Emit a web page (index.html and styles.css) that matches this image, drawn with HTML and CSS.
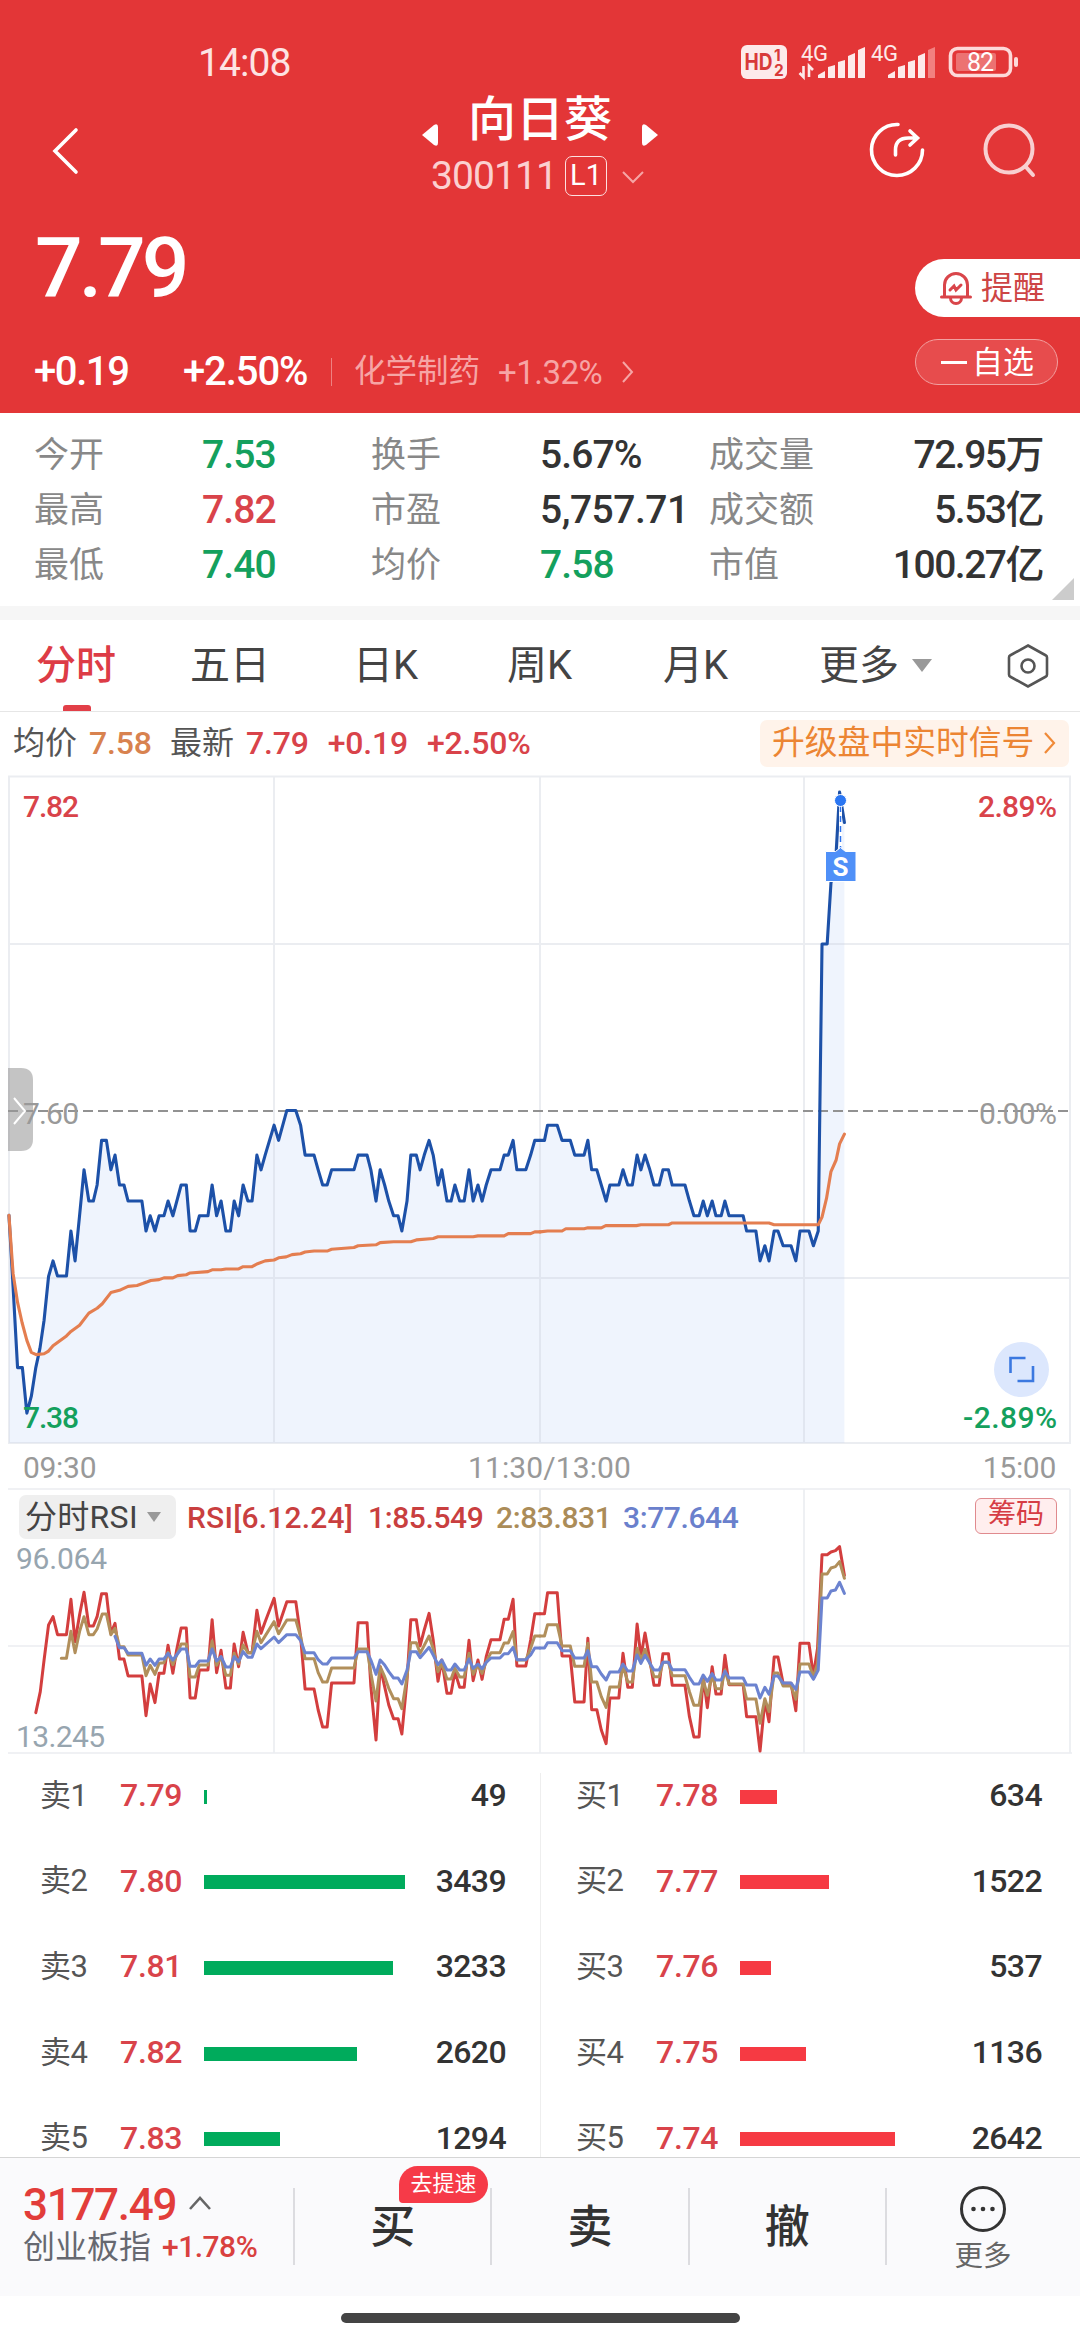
FILE: index.html
```html
<!DOCTYPE html>
<html lang="zh-CN">
<head>
<meta charset="utf-8">
<title>向日葵 300111</title>
<link rel="stylesheet" href="styles.css">
</head>
<body>
<header class="header">
  <div class="status">
    <span class="clock">14:08</span>
    <svg class="status-icons" width="290" height="40" viewBox="0 0 290 40">
      <rect x="0" y="3" width="46" height="34" rx="6" fill="#fdeaea"/>
      <text x="3.500" y="28" class="st-hd" textLength="28" lengthAdjust="spacingAndGlyphs">HD</text>
      <text x="33" y="18.500" class="st-sub">1</text>
      <text x="33" y="34" class="st-sub">2</text>
      <text x="60" y="19" class="st-4g" textLength="27">4G</text>
      <path d="M62.500 24v11l-4-4M68 35v-11l4 4" fill="none" stroke="#fdeaea" stroke-width="2.600"/>
      <g fill="#fdeaea">
        <path d="M77 36v-3l7-4v7zM87 36V25l7-2v13zM97 36V20l7-2v18zM107 36V14l7-3v25zM117 36V8l7-3v31z"/>
        <path d="M147 36v-3l7-4v7zM157 36V25l7-2v13zM167 36V20l7-2v18zM177 36V14l7-3v25z"/>
      </g>
      <path d="M187 36V8l7-3v31z" fill="#f28080"/>
      <text x="130" y="19" class="st-4g" textLength="27">4G</text>
      <rect x="209.500" y="6.500" width="60" height="27" rx="7" fill="none" stroke="#fdd9d9" stroke-width="3.600"/>
      <rect x="215" y="11" width="40" height="18" rx="2" fill="#ec7272"/>
      <rect x="273" y="15" width="4" height="10" rx="2" fill="#fdd9d9"/>
      <text x="226" y="28.500" class="st-bat" textLength="27">82</text>
    </svg>
  </div>
  <nav class="nav">
    <svg class="back" width="34" height="50" viewBox="0 0 34 50"><path d="M27 4L6 25l21 21"/></svg>
    <div class="title">
      <div class="name-row">
        <svg width="17" height="24" viewBox="0 0 17 24"><path d="M0 12L12 2q4-2 4 2v16q0 4-4 2z" fill="#fff"/></svg>
        <h1>向日葵</h1>
        <svg width="17" height="24" viewBox="0 0 17 24"><path d="M17 12L5 2Q1 0 1 4v16q0 4 4 2z" fill="#fff"/></svg>
      </div>
      <div class="code-row">
        <span class="code">300111</span><span class="level">L1</span>
        <svg width="24" height="14" viewBox="0 0 24 14"><path d="M2 2l10 10L22 2" fill="none" stroke="#f6a5a5" stroke-width="2"/></svg>
      </div>
    </div>
    <svg class="share" width="60" height="60" viewBox="0 0 60 60"><path d="M31 4.500A25.500 25.500 0 1 0 55.500 30M28.500 35v-5q0-12 13-12h8M43 11l7.500 7-7.500 7"/></svg>
    <svg class="search" width="60" height="60" viewBox="0 0 60 60"><circle cx="29" cy="29" r="23.500"/><path d="M46 47l7 8"/></svg>
  </nav>
  <div class="price-row">
    <div class="price">7.79</div>
    <button class="remind">
      <svg width="32" height="34" viewBox="0 0 32 34"><path d="M1.500 26H30.500M4.500 26V14a11.500 11.500 0 0 1 23 0v12M10.500 27a5.500 5.500 0 0 0 11 0M10 19l4-4 2 4 5-5"/></svg>
      <span>提醒</span>
    </button>
  </div>
  <div class="change-row">
    <span class="chg">+0.19</span><span class="pct">+2.50%</span><i class="vr"></i>
    <span class="sector">化学制药</span><span class="sector-pct">+1.32%</span>
    <svg width="14" height="24" viewBox="0 0 14 24"><path d="M2 2l9 10-9 10" fill="none" stroke="#f6a5a5" stroke-width="2"/></svg>
    <button class="fav"><i></i><span>自选</span></button>
  </div>
</header>

<section class="quote">
  <span class="k">今开</span><span class="v down">7.53</span><span class="k">换手</span><span class="v">5.67%</span><span class="k">成交量</span><span class="v r">72.95万</span>
  <span class="k">最高</span><span class="v up">7.82</span><span class="k">市盈</span><span class="v">5,757.71</span><span class="k">成交额</span><span class="v r">5.53亿</span>
  <span class="k">最低</span><span class="v down">7.40</span><span class="k">均价</span><span class="v down">7.58</span><span class="k">市值</span><span class="v r">100.27亿</span>
  <i class="corner"></i>
</section>

<nav class="tabs">
  <span class="tab on">分时</span><span class="tab">五日</span><span class="tab">日K</span><span class="tab">周K</span><span class="tab">月K</span><span class="tab more">更多<i class="caret"></i></span>
  <svg class="hex" width="44" height="46" viewBox="0 0 44 46"><path d="M22 2.500L40 12.500q1 .5 1 2v17q0 1.500-1 2L22 43.500 4 33.500q-1-.5-1-2v-17q0-1.500 1-2z"/><circle cx="22" cy="23" r="6.500"/></svg>
</nav>

<div class="info">
  <span>均价</span><b class="orange">7.58</b><span class="latest">最新</span><b class="up">7.79</b><b class="up gap">+0.19</b><b class="up gap">+2.50%</b>
  <a class="promo">升级盘中实时信号<svg width="14" height="26" viewBox="0 0 14 26"><path d="M2 3l9 10-9 10" fill="none" stroke="#f08a38" stroke-width="2.200"/></svg></a>
</div>

<svg class="price-chart" width="1080" height="672" viewBox="0 774 1080 672">
  <!-- one minute is about 13 units wide, one cent about 34 units high in each session group -->
  <g transform="translate(0 760) scale(.34435 .44643)">
    <path class="area" d="M26 1530L26 1020 38 1180 51 1361 65 1361 78 1463 91 1425 104 1361 116 1318 128 1255 141 1157 154 1122 167 1156 193 1156 206 1055 218 1122 231 1021 244 918 258 988 271 988 282 952 295 852 309 852 322 918 334 885 347 952 360 952 372 988 412 988 424 1055 436 1021 450 1055 462 1021 476 1021 488 988 502 1021 526 952 541 952 552 1055 567 1055 579 1021 604 1021 616 952 629 1021 642 988 656 1055 669 1055 680 988 693 1021 706 952 720 988 732 988 746 885 758 918 770 885 796 818 809 852 833 785 859 785 873 818 886 885 912 885 924 918 937 952 950 952 963 918 1028 918 1040 885 1066 885 1077 918 1092 988 1104 918 1117 952 1129 988 1143 1021 1156 1021 1167 1055 1182 988 1193 885 1209 885 1220 918 1232 885 1246 852 1258 885 1272 952 1283 918 1298 988 1310 988 1321 952 1335 988 1348 988 1362 918 1374 988 1388 952 1400 988 1412 952 1426 918 1452 918 1464 885 1476 885 1490 852 1501 918 1527 918 1541 885 1553 852 1568 852V1530z"/>
  </g>
  <g transform="translate(540 760) scale(.34435 .44643)">
    <path class="area" d="M0 1530L0 852 13 852 22 818 50 818 64 852 88 852 101 885 128 885 139 852 150 918 165 918 178 952 192 988 203 952 229 952 241 918 255 952 268 952 282 885 293 918 305 885 319 918 331 952 346 952 357 918 373 918 384 952 421 952 434 988 447 1021 462 1021 474 988 486 1021 500 988 511 1021 526 1021 537 988 549 1021 590 1021 600 1055 627 1055 639 1122 653 1088 665 1122 680 1055 691 1055 706 1088 729 1088 743 1122 755 1055 781 1055 794 1088 808 1055 819 412 834 412 845 275 858 235 870 72 884 140V1530z"/>
  </g>
  <path class="grid" d="M9 776.500H1070V1443H9zM9 944H1070M9 1278H1070M274 776V1443M540 776V1443M804 776V1443"/>
  <path class="mid" d="M8 1111H1068"/>
  <g transform="translate(0 760) scale(.34435 .44643)">
    <polyline class="blue-line" points="26 1020 38 1180 51 1361 65 1361 78 1463 91 1425 104 1361 116 1318 128 1255 141 1157 154 1122 167 1156 193 1156 206 1055 218 1122 231 1021 244 918 258 988 271 988 282 952 295 852 309 852 322 918 334 885 347 952 360 952 372 988 412 988 424 1055 436 1021 450 1055 462 1021 476 1021 488 988 502 1021 526 952 541 952 552 1055 567 1055 579 1021 604 1021 616 952 629 1021 642 988 656 1055 669 1055 680 988 693 1021 706 952 720 988 732 988 746 885 758 918 770 885 796 818 809 852 833 785 859 785 873 818 886 885 912 885 924 918 937 952 950 952 963 918 1028 918 1040 885 1066 885 1077 918 1092 988 1104 918 1117 952 1129 988 1143 1021 1156 1021 1167 1055 1182 988 1193 885 1209 885 1220 918 1232 885 1246 852 1258 885 1272 952 1283 918 1298 988 1310 988 1321 952 1335 988 1348 988 1362 918 1374 988 1388 952 1400 988 1412 952 1426 918 1452 918 1464 885 1476 885 1490 852 1501 918 1527 918 1541 885 1553 852 1568 852"/>
    <polyline class="avg-line" points="26 1020 38 1150 51 1215 64 1260 78 1300 91 1327 105 1332 128 1330 141 1324 154 1312 193 1290 206 1280 231 1266 258 1239 282 1228 297 1218 322 1193 347 1188 372 1179 398 1177 424 1170 438 1166 462 1164 476 1160 502 1160 516 1155 541 1153 552 1149 604 1146 616 1142 642 1142 656 1140 693 1140 706 1135 732 1135 746 1129 770 1122 796 1120 809 1115 831 1113 848 1108 873 1106 886 1102 912 1100 950 1100 963 1096 1028 1092 1040 1088 1092 1086 1104 1081 1143 1079 1193 1079 1209 1075 1258 1072 1272 1068 1374 1068 1388 1066 1464 1066 1476 1061 1541 1061 1553 1057 1568 1057"/>
  </g>
  <g transform="translate(540 760) scale(.34435 .44643)">
    <polyline class="blue-line" points="0 852 13 852 22 818 50 818 64 852 88 852 101 885 128 885 139 852 150 918 165 918 178 952 192 988 203 952 229 952 241 918 255 952 268 952 282 885 293 918 305 885 319 918 331 952 346 952 357 918 373 918 384 952 421 952 434 988 447 1021 462 1021 474 988 486 1021 500 988 511 1021 526 1021 537 988 549 1021 590 1021 600 1055 627 1055 639 1122 653 1088 665 1122 680 1055 691 1055 706 1088 729 1088 743 1122 755 1055 781 1055 794 1088 808 1055 819 412 834 412 845 275 858 235 870 72 884 140"/>
    <polyline class="avg-line" points="0 1057 22 1055 64 1055 75 1050 128 1050 139 1048 178 1048 191 1043 280 1043 293 1041 373 1041 384 1037 665 1037 680 1041 808 1041 819 1024 832 982 845 922 860 896 870 860 884 838"/>
  </g>
  <path d="M840.500 804V848" stroke="#fff" stroke-width="3"/>
  <path d="M840.500 806V848" stroke="#2a72ee" stroke-width="1.500" stroke-dasharray="6 4"/>
  <circle cx="840.500" cy="800.500" r="6" fill="#2a76f2" stroke="#fff" stroke-width="1"/>
  <path d="M825.500 851.500h10l5-4 5 4h10.500v30h-30.500z" fill="#4f90f8" stroke="#fff" stroke-width="1"/>
  <text x="840.500" y="875.500" class="s-mark" text-anchor="middle">S</text>
  <text x="23" y="817" class="lab up" textLength="56">7.82</text>
  <text x="1057" y="817" class="lab up" text-anchor="end" textLength="79">2.89%</text>
  <text x="23" y="1124" class="lab gray" textLength="56">7.60</text>
  <text x="1057" y="1124" class="lab gray" text-anchor="end" textLength="78">0.00%</text>
  <text x="23" y="1428" class="lab down" textLength="56">7.38</text>
  <text x="1057" y="1428" class="lab down" text-anchor="end" textLength="94">-2.89%</text>
  <circle cx="1021.500" cy="1369.500" r="27.500" fill="#dce7fd"/>
  <path d="M1010.500 1373v-15h15M1033 1366v15h-15.500" fill="none" stroke="#3b78e0" stroke-width="2.600"/>
  <path d="M8 1068h13q12 0 12 12v59q0 12-12 12h-13z" fill="#999" fill-opacity=".58"/>
  <path d="M14 1098l11 13-11 13" fill="none" stroke="#fff" stroke-width="2"/>
</svg>

<div class="axis"><span>09:30</span><span>11:30/13:00</span><span>15:00</span></div>

<section class="rsi">
  <svg class="rsi-chart" width="1080" height="266" viewBox="0 1488 1080 266">
    <path class="grid thin" d="M8 1489H1070M8 1646H1070M8 1753H1072M274 1489V1753M540 1489V1753M804 1489V1753M1070 1489V1753"/>
    <g transform="translate(0 1430) scale(.34435 .33333)">
      <polyline class="r1" points="104 848 117 785 128 690 141 585 154 560 167 614 193 614 206 508 218 635 231 555 244 487 258 588 271 588 282 560 295 491 309 491 322 610 334 580 347 687 360 687 372 738 412 738 424 857 436 762 450 818 462 730 476 730 488 646 502 730 513 660 526 594 541 594 552 804 567 804 579 720 604 720 616 569 629 728 642 661 656 774 669 774 680 642 693 710 706 607 720 668 732 668 746 541 758 610 770 575 796 505 809 588 833 515 859 515 873 620 886 777 912 777 924 840 937 891 950 891 963 759 1028 759 1040 578 1066 578 1077 770 1092 930 1104 710 1117 770 1129 825 1143 866 1156 866 1167 912 1182 750 1193 569 1209 569 1220 648 1232 600 1246 550 1258 630 1272 754 1283 690 1298 790 1310 790 1321 725 1335 772 1348 772 1362 631 1374 752 1388 690 1400 748 1412 680 1426 629 1452 629 1464 568 1476 568 1490 508 1501 708 1527 708 1541 630 1553 551 1568 551"/>
      <polyline class="r2" points="178 685 193 685 206 604 218 668 231 605 244 560 258 614 271 614 282 597 297 552 309 552 322 614 334 595 347 650 360 650 372 675 412 675 424 737 436 706 450 733 462 700 476 698 488 667 502 704 526 642 541 642 552 741 567 741 579 705 604 705 616 633 629 706 642 680 656 736 669 736 680 670 693 702 706 645 720 668 732 668 746 604 758 638 796 575 809 611 833 570 859 570 873 620 886 686 912 686 924 728 937 756 950 756 963 714 1028 714 1040 657 1066 657 1077 730 1092 813 1104 710 1117 740 1129 775 1143 806 1156 806 1167 836 1182 740 1193 638 1209 638 1220 670 1246 618 1258 656 1272 725 1283 700 1298 747 1310 747 1321 715 1335 741 1348 741 1362 670 1374 733 1388 704 1400 730 1412 695 1426 668 1452 668 1464 639 1476 639 1490 605 1501 690 1527 690 1541 655 1553 618 1568 618"/>
      <polyline class="r3" points="334 619 347 653 360 653 372 670 412 670 424 706 436 687 450 706 462 687 476 687 488 670 502 690 526 657 541 657 552 709 567 709 579 693 604 693 616 657 629 693 642 680 656 711 669 711 680 680 693 695 706 665 720 682 732 682 746 642 758 656 796 621 809 638 833 614 859 614 873 632 886 668 912 668 924 689 937 702 950 702 963 684 1028 684 1040 665 1066 665 1077 690 1092 733 1104 690 1117 705 1129 725 1143 744 1156 744 1167 762 1182 720 1193 665 1209 665 1220 683 1246 652 1258 675 1272 704 1283 690 1298 720 1310 720 1321 702 1335 720 1348 720 1362 687 1374 715 1388 702 1400 716 1412 697 1426 684 1452 684 1464 671 1476 671 1490 652 1501 689 1527 689 1541 675 1553 654 1568 654"/>
    </g>
    <g transform="translate(540 1430) scale(.34435 .33333)">
      <polyline class="r1" points="0 551 13 551 22 488 50 488 64 678 88 678 101 816 128 816 139 625 150 839 165 839 178 900 192 941 203 804 229 804 241 670 255 772 268 772 282 582 293 680 305 609 319 690 331 766 346 766 357 671 373 671 384 766 421 766 434 860 447 921 462 921 474 740 486 833 500 710 511 792 526 792 537 676 549 764 590 764 600 860 627 860 639 963 653 812 665 875 680 681 691 681 706 760 729 760 743 842 755 640 781 640 794 737 806 655 819 374 834 374 845 366 858 362 870 350 884 436"/>
      <polyline class="r2" points="0 618 13 618 22 584 50 584 64 648 88 648 101 709 128 709 139 640 150 756 165 756 178 800 192 832 203 771 229 771 241 708 255 756 268 756 282 655 293 690 305 658 319 700 331 740 346 740 357 697 373 697 384 737 421 737 434 785 447 826 462 826 474 750 486 796 500 735 511 776 526 776 537 720 549 762 590 762 600 807 627 807 639 880 653 806 665 845 680 729 691 729 706 768 729 768 743 808 755 702 781 702 794 740 806 700 819 432 834 432 845 414 858 410 870 395 884 445"/>
      <polyline class="r3" points="0 654 13 654 22 638 50 638 64 662 88 662 101 684 128 684 139 662 150 710 165 710 178 732 192 750 203 726 229 726 241 702 255 723 268 723 282 675 293 700 305 676 319 700 331 720 346 720 357 697 373 697 384 719 421 719 434 742 447 762 462 762 474 735 486 754 500 731 511 750 526 750 537 724 549 744 590 744 600 765 627 765 639 804 653 772 665 793 680 738 691 738 706 759 729 759 743 778 755 726 781 726 794 748 808 720 819 504 834 504 845 483 858 480 870 457 884 490"/>
    </g>
    <text x="16" y="1569" class="lab slate" textLength="91">96.064</text>
    <text x="16" y="1747" class="lab slate" textLength="89">13.245</text>
  </svg>
  <div class="legend">
    <span class="tag">分时RSI<i class="caret small"></i></span>
    <span class="l0">RSI[6.12.24]</span><span class="l1">1:85.549</span><span class="l2">2:83.831</span><span class="l3">3:77.644</span>
    <span class="chips">筹码</span>
  </div>
</section>

<section class="book">
  <div class="side sell">
    <div class="row"><span class="n">卖1</span><span class="p">7.79</span><i style="width:3px"></i><span class="q">49</span></div>
    <div class="row"><span class="n">卖2</span><span class="p">7.80</span><i style="width:201px"></i><span class="q">3439</span></div>
    <div class="row"><span class="n">卖3</span><span class="p">7.81</span><i style="width:189px"></i><span class="q">3233</span></div>
    <div class="row"><span class="n">卖4</span><span class="p">7.82</span><i style="width:153px"></i><span class="q">2620</span></div>
    <div class="row"><span class="n">卖5</span><span class="p">7.83</span><i style="width:76px"></i><span class="q">1294</span></div>
  </div>
  <div class="side buy">
    <div class="row"><span class="n">买1</span><span class="p">7.78</span><i style="width:37px"></i><span class="q">634</span></div>
    <div class="row"><span class="n">买2</span><span class="p">7.77</span><i style="width:89px"></i><span class="q">1522</span></div>
    <div class="row"><span class="n">买3</span><span class="p">7.76</span><i style="width:31px"></i><span class="q">537</span></div>
    <div class="row"><span class="n">买4</span><span class="p">7.75</span><i style="width:66px"></i><span class="q">1136</span></div>
    <div class="row"><span class="n">买5</span><span class="p">7.74</span><i style="width:155px"></i><span class="q">2642</span></div>
  </div>
</section>

<footer class="footer">
  <div class="index">
    <div class="index-val"><span>3177.49</span><svg width="24" height="16" viewBox="0 0 24 16"><path d="M2 14L12 3l10 11" fill="none" stroke="#666" stroke-width="2.600"/></svg></div>
    <div class="index-name">创业板指<b>+1.78%</b></div>
  </div>
  <div class="act">买<span class="badge">去提速</span></div>
  <div class="act">卖</div>
  <div class="act">撤</div>
  <div class="act last">
    <svg width="48" height="48" viewBox="0 0 48 48"><circle cx="24" cy="24" r="21.500" fill="none" stroke="#333" stroke-width="3"/><g fill="#333"><circle cx="14.500" cy="24" r="2.300"/><circle cx="24" cy="24" r="2.300"/><circle cx="33.500" cy="24" r="2.300"/></g></svg>
    <span>更多</span>
  </div>
</footer>
<div class="home"><i></i></div>
</body>
</html>
```

FILE: styles.css
```css
* { box-sizing: border-box; }
body {
  margin: 0;
  width: 1080px;
  height: 2340px;
  overflow: hidden;
  background: #fff;
  color: #333;
  font-family: Roboto, "Noto Sans CJK SC", sans-serif;
  line-height: 1;
}
svg { display: block; flex: none; }
i { display: block; flex: none; font-style: normal; }
b { font-weight: 500; }
button { font: inherit; border: 0; padding: 0; margin: 0; }
h1 { margin: 0; }
span, b, a { white-space: nowrap; }
.up { color: #d9434a; fill: #d9434a; }
.down { color: #14a05d; fill: #14a05d; }

.header { height: 413px; background: #e33637; color: #fff; overflow: hidden; }
.status { display: flex; align-items: center; height: 84px; }
.clock { width: 542px; margin-left: 198px; padding-top: 42px; height: 84px; font-size: 39px; letter-spacing: -.9px; color: #fde3e3; line-height: 42px; }
.status-icons { margin-left: 1px; margin-top: 40px; }
.st-hd { font: 700 23px Inter, sans-serif; fill: #d83a3a; }
.st-sub { font: 700 15.5px Inter, sans-serif; fill: #d83a3a; }
.st-4g { font: 400 22px Roboto, sans-serif; fill: #fdeaea; }
.st-bat { font: 400 25px Roboto, sans-serif; fill: #fff; }

.nav { display: flex; height: 121px; padding: 8px 0 0 49px; }
.back { margin-top: 34px; }
.back path { fill: none; stroke: #fff; stroke-width: 3.6; stroke-linecap: round; }
.title { width: 236px; margin-left: 339px; }
.name-row { display: flex; justify-content: space-between; height: 62px; }
.name-row svg { margin-top: 31px; }
.name-row h1 { padding-top: 1px; font-size: 48px; line-height: 54px; font-weight: 500; }
.code-row { display: flex; align-items: center; height: 40px; padding-left: 9px; margin-top: 2px; }
.code { width: 134px; font-size: 39px; letter-spacing: -.9px; color: #fbd0d0; }
.level { width: 42px; height: 40px; border: 1.5px solid #fde0e0; border-radius: 7px; font-size: 29px; line-height: 37px; text-align: center; }
.code-row svg { margin-left: 14px; margin-top: 2px; }
.share { margin: 28px 0 0 209px; }
.share path { fill: none; stroke: #fff; stroke-width: 3.6; stroke-linecap: round; }
.search { margin: 28px 0 0 53px; }
.search * { fill: none; stroke: #f8cfd0; stroke-width: 4; stroke-linecap: round; }

.price-row { display: flex; justify-content: space-between; height: 134px; padding-left: 35px; }
.price { padding-top: 20px; font-size: 84px; line-height: 88px; font-weight: 500; letter-spacing: -4px; }
.remind { display: flex; align-items: center; width: 165px; height: 58px; margin-top: 54px; padding-left: 25px; border-radius: 29px 0 0 29px; background: #fff; color: #cd4545; font-size: 32px; }
.remind svg { margin-right: 9px; fill: none; stroke: #d9454a; stroke-width: 3; stroke-linecap: round; }
.change-row { display: flex; align-items: center; height: 46px; padding-left: 34px; }
.chg, .pct, .vr, .sector, .sector-pct, .change-row > svg { margin-top: 20px; }
.chg { width: 149px; font-size: 40px; font-weight: 500; letter-spacing: -1.4px; }
.pct { width: 148px; font-size: 40px; font-weight: 500; letter-spacing: -1.1px; }
.vr { width: 1px; height: 28px; background: #ee8181; }
.sector { width: 144px; margin-left: 22px; font-size: 31.5px; color: #f6a5a5; }
.sector-pct { width: 123px; font-size: 33px; letter-spacing: -.5px; color: #f6a5a5; }
.fav { display: flex; align-items: center; width: 143px; height: 46px; margin-left: auto; margin-right: 22px; border: 1px solid #f2a0a0; border-radius: 23px; background: #e74c4d; color: #fff; padding-left: 25px; font-size: 31px; }
.fav i { width: 26px; height: 3px; margin-right: 5px; background: #fff; }

.quote { position: relative; display: grid; grid-template-columns: 168px 169px 169px 169px 110px 224px; grid-auto-rows: 55px; height: 193px; padding: 14.5px 0 0 34px; line-height: 55px; }
.k { font-size: 35px; color: #888; }
.v { font-size: 39px; font-weight: 500; letter-spacing: -.9px; }
.v:nth-child(10) { letter-spacing: -.5px; }
.v.r { text-align: right; letter-spacing: -1.5px; }
.corner { position: absolute; right: 6px; bottom: 6px; border-left: 22px solid transparent; border-bottom: 22px solid #ccc; }

.tabs { display: flex; height: 106px; padding: 0 0 0 36px; border-top: 14px solid #f6f6f6; border-bottom: 1px solid #e6e6e6; font-size: 40px; line-height: 92px; }
.tab { position: relative; width: 156px; color: #444; }
.tab.on { width: 154px; color: #dd3c46; font-weight: 500; }
.tab.on::after { content: ""; position: absolute; left: 27px; bottom: 0; width: 28px; height: 6px; border-radius: 3px 3px 0 0; background: #e23f48; }
.tab:nth-child(2) { width: 163px; }
.tab:nth-child(3) { width: 154px; }
.more { display: flex; align-items: center; width: 186px; }
.caret { margin-left: 13px; border: 10px solid transparent; border-top: 13px solid #999; border-bottom: 0; }
.hex { margin-top: 23px; margin-left: 1px; fill: none; stroke: #555; stroke-width: 2.6; }

.info { display: flex; align-items: center; height: 62px; padding: 0 11px 0 13px; font-size: 32px; color: #555; }
.info b { letter-spacing: -.2px; }
.info .orange { margin-left: 12px; color: #d8824f; width: 81px; }
.latest { margin-right: 12px; }
.info .gap { margin-left: 19px; }
.promo { display: flex; align-items: center; justify-content: space-between; width: 309px; height: 47px; margin-left: auto; padding: 0 12px; border-radius: 7px; background: #fff3ea; color: #ec8533; font-size: 32.8px; }

.grid { fill: none; stroke: #c8ccd8; stroke-opacity: .36; stroke-width: 2; }
.grid.thin { stroke-width: 1.7; }
.area { fill: #eff4fd; }
.mid { stroke: #929292; stroke-width: 2; stroke-dasharray: 10 5; fill: none; }
polyline { fill: none; stroke-linejoin: round; stroke-linecap: round; vector-effect: non-scaling-stroke; }
.blue-line { stroke: #1d51a8; stroke-width: 3.1; }
.avg-line { stroke: #e47e50; stroke-width: 3.1; }
.r1, .r2, .r3 { stroke-width: 3; }
.r1 { stroke: #d33e3e; }
.r2 { stroke: #b18f5b; }
.r3 { stroke: #6c83d0; }
.lab { font-size: 30px; font-weight: 500; }
.gray { fill: #999; font-weight: 400; }
.slate { fill: #97a5af; font-weight: 400; }
.s-mark { font: 700 26px Roboto, sans-serif; fill: #fff; }

.axis { display: grid; grid-template-columns: 1fr auto 1fr; align-items: center; height: 42px; padding: 1px 24px 0 23px; font-size: 30px; color: #999; }
.axis span { letter-spacing: -.3px; }
.axis span:nth-child(2) { padding-left: 20px; letter-spacing: .1px; }
.axis span:last-child { text-align: right; }

.rsi { position: relative; height: 266px; }
.rsi-chart { position: absolute; left: 0; top: 0; }
.legend { position: relative; display: flex; align-items: flex-start; padding: 7px 0 0 19px; font-size: 30px; line-height: 45px; }
.tag { display: flex; align-items: center; width: 157px; height: 44px; margin-right: 11px; padding-left: 6px; border-radius: 7px; background: #efefef; color: #444; font-size: 32px; letter-spacing: .3px; }
.caret.small { margin-left: 9px; border-width: 10px 7px 0; }
.l0, .l1, .l2, .l3 { font-weight: 500; letter-spacing: -.4px; }
.l0 { width: 181px; color: #c93f3f; letter-spacing: .2px; }
.l1 { width: 128px; color: #c93f3f; }
.l2 { width: 127px; color: #ab8c58; }
.l3 { color: #6a80cc; }
.chips { width: 82px; height: 36px; margin: 3px 23px 0 auto; border: 1.5px solid #e08a8e; border-radius: 6px; background: #ffeeee; color: #d63c44; font-size: 28px; line-height: 32px; text-align: center; }

.book { display: flex; height: 403px; padding-top: 19px; overflow: hidden; }
.side { width: 540px; padding-left: 40px; }
.buy { padding-left: 35px; border-left: 1px solid #eee; }
.row:first-child { margin-top: -20.5px; }
.row { display: flex; align-items: center; height: 85.6px; font-size: 32px; }
.n { width: 80px; color: #555; letter-spacing: -.5px; font-size: 31px; }
.p { width: 84px; color: #d9434a; font-weight: 500; letter-spacing: -.3px; }
.row i { height: 14px; margin-top: 3px; background: #00ab5c; }
.buy .row i { background: #f63a43; }
.q { margin-left: auto; margin-right: 34px; letter-spacing: -.6px; font-weight: 500; }
.buy .q { margin-right: 38px; }

.footer { display: flex; height: 139px; background: #fafafc; border-top: 1px solid #d5d5d5; }
.index { flex: none; width: 294px; padding: 24px 0 0 23px; }
.index-val { display: flex; align-items: center; height: 46px; color: #e23d3a; font-size: 44px; font-weight: 500; letter-spacing: -1.3px; }
.index-val svg { margin: -4px 0 0 12px; }
.index-name { display: flex; align-items: center; height: 40px; margin-top: -1px; font-size: 32px; color: #666870; }
.index-name b { margin-left: 11px; color: #d9413f; font-size: 30px; letter-spacing: -.5px; }
.act { position: relative; flex: none; display: flex; justify-content: center; width: 197.3px; font-size: 45px; font-weight: 500; line-height: 139px; }
.act::before { content: ""; position: absolute; left: -1px; top: 30px; width: 2px; height: 77px; background: #dcdce0; }
.badge { position: absolute; left: 105px; top: 8px; width: 89px; height: 37px; border-radius: 19px 19px 19px 4px; background: #f63a48; color: #fff; font-size: 22px; font-weight: 400; line-height: 36px; text-align: center; }
.act.last { width: 194px; flex-direction: column; justify-content: flex-start; align-items: center; padding-top: 27px; font-size: 28.5px; line-height: 48px; font-weight: 400; color: #666; }
.home { display: flex; justify-content: center; height: 44px; padding-top: 17px; }
.home i { width: 399px; height: 10px; border-radius: 5px; background: #444; }
```
